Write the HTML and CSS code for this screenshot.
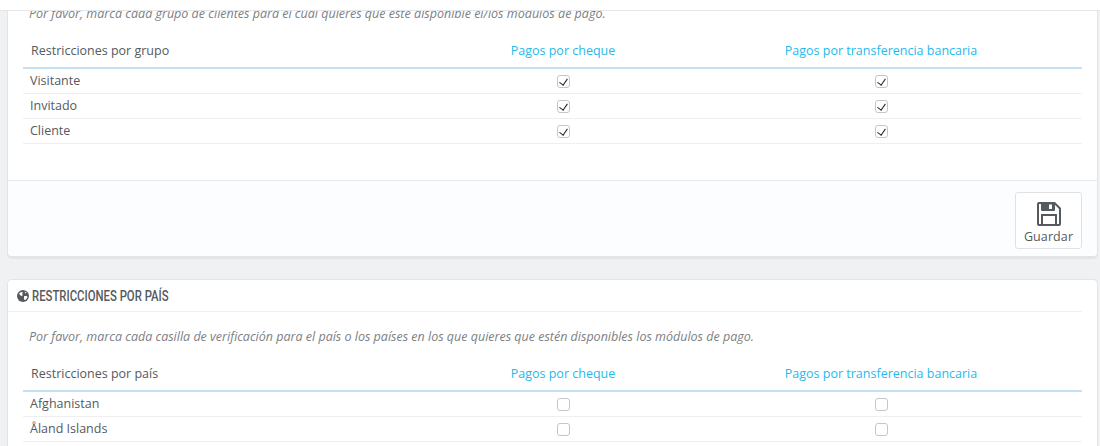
FILE: index.html
```html
<!DOCTYPE html>
<html lang="es">
<head>
<meta charset="utf-8">
<title>Restricciones</title>
<link rel="stylesheet" href="styles.css">
</head>
<body>
<div class="topbar"></div>
<section class="panel panel-first">
  <div class="panel-body">
    <p class="help clipped">Por favor, marca cada grupo de clientes para el cual quieres que esté disponible el/los módulos de pago.</p>
    <table class="grid">
      <thead><tr><th>Restricciones por grupo</th><th class="mod">Pagos por cheque</th><th class="mod">Pagos por transferencia bancaria</th><th class="end"></th></tr></thead>
      <tbody>
        <tr><td>Visitante</td><td class="c"><span class="box on"></span></td><td class="c"><span class="box on"></span></td><td></td></tr>
        <tr><td>Invitado</td><td class="c"><span class="box on"></span></td><td class="c"><span class="box on"></span></td><td></td></tr>
        <tr><td>Cliente</td><td class="c"><span class="box on"></span></td><td class="c"><span class="box on"></span></td><td></td></tr>
      </tbody>
    </table>
  </div>
  <div class="panel-footer">
    <button class="save" type="button">
      <svg class="save-icon" viewBox="0 0 24 24" width="24" height="24" aria-hidden="true">
        <path fill="none" stroke="#555a5e" stroke-width="2" d="M2 1h15.500L23 6.500V22a1 1 0 0 1-1 1H2a1 1 0 0 1-1-1V2a1 1 0 0 1 1-1z"/>
        <path fill="#555a5e" fill-rule="evenodd" d="M4 1h14v7a1 1 0 0 1-1 1H5a1 1 0 0 1-1-1zM12 2.500h3v4.500h-3z"/>
        <rect x="5" y="13" width="14" height="10" fill="none" stroke="#555a5e" stroke-width="2"/>
      </svg>
      <span>Guardar</span>
    </button>
  </div>
</section>
<section class="panel panel-second">
  <h3 class="panel-heading">
    <svg class="globe" viewBox="0 0 12 12" width="12" height="12" aria-hidden="true"><circle cx="6" cy="6" r="6" fill="#555a5e"/><path fill="#fff" d="M2 3.500l2-1.500 2 .5-1 1.500 1 1-1.500 1L3 5zM7 6l3 0 .5 1.500L8.500 10 7 9.500zM7.500 1.500l2 1-1 1z"/></svg>
    <span class="heading-text">RESTRICCIONES POR PAÍS</span>
  </h3>
  <div class="panel-body">
    <p class="help">Por favor, marca cada casilla de verificación para el país o los países en los que quieres que estén disponibles los módulos de pago.</p>
    <table class="grid">
      <thead><tr><th>Restricciones por país</th><th class="mod">Pagos por cheque</th><th class="mod">Pagos por transferencia bancaria</th><th class="end"></th></tr></thead>
      <tbody>
        <tr><td>Afghanistan</td><td class="c"><span class="box"></span></td><td class="c"><span class="box"></span></td><td></td></tr>
        <tr><td>Åland Islands</td><td class="c"><span class="box"></span></td><td class="c"><span class="box"></span></td><td></td></tr>
      </tbody>
    </table>
  </div>
</section>
</body>
</html>
```
FILE: styles.css
```css
* { box-sizing: border-box; }
html, body { height: 446px; overflow: hidden; }
body { margin: 0; padding: 0 2px 0 7px; background: #eff1f2; font-family: "Open Sans", sans-serif; font-size: 12.500px; color: #555a5e; }
.topbar { height: 11px; margin: 0 -2px 0 -7px; background: #fff; border-bottom: 1px solid #e4e6e8; position: relative; z-index: 2; }
.panel { background: #fff; border: 1px solid #e2e5e7; border-radius: 5px; box-shadow: 0 2px 0 rgba(0,0,0,.05); }
.panel-first { margin-top: -1px; height: 247px; border-top: 0; border-radius: 0 0 5px 5px; display: flex; flex-direction: column; overflow: hidden; }
.panel-second { margin-top: 22px; height: 167px; border-bottom: 0; border-radius: 5px 5px 0 0; box-shadow: none; overflow: hidden; }
.panel-body { padding: 0 15px; }
.panel-first .panel-body { height: 170px; }
.panel-footer { flex: 1; background: #fcfdfe; border-top: 1px solid #e8ebed; padding: 11px 15px 0; display: flex; justify-content: flex-end; align-items: flex-start; }
.help { margin: 0; height: 25px; padding-left: 6px; font-style: italic; font-size: 12.500px; color: #7c8084; line-height: 17px; }
.clipped { margin-top: -5px; height: 25px; }
.grid { width: 100%; table-layout: fixed; border-collapse: separate; border-spacing: 0; }
.grid th { height: 39px; font-weight: 400; text-align: left; padding: 4px 0 0 8px; border-bottom: 2px solid #c2e2f4; color: #555a5e; }
.grid th.mod { text-align: center; color: #25b9ed; padding: 4px 0 0; width: 318px; }
.grid th.end { width: 42px; padding: 0; }
.grid td { height: 25px; padding: 0 0 2px 7px; border-bottom: 1px solid #eeeff0; }
.grid td.c { padding: 0 0 2px; text-align: center; }
.box { display: inline-block; width: 13px; height: 13px; border: 1px solid #c4c6c8; border-radius: 3px; background: #fff; vertical-align: middle; position: relative; }
.box.on::after { content: ""; position: absolute; left: 3.500px; top: 1px; width: 4px; height: 7px; border: solid #222; border-width: 0 1.500px 1.500px 0; transform: rotate(35deg); }
.save { width: 67px; height: 57px; padding: 9px 0 0; background: #fff; border: 1px solid #dfe2e4; border-radius: 3px; font: inherit; font-size: 12.500px; letter-spacing: .1px; color: #555a5e; display: flex; flex-direction: column; align-items: center; gap: 2px; }
.save-icon { display: block; }
.panel-heading { margin: 0 15px 0 0; height: 32px; padding-left: 9px; border-bottom: 1px solid #eef0f1; font-family: Roboto, "Open Sans", sans-serif; font-size: 14px; font-weight: 500; color: #555a5e; display: flex; align-items: center; gap: 3px; }
.heading-text { display: inline-block; transform: scaleX(.81); transform-origin: left center; white-space: nowrap; }
.panel-second .panel-body { padding-top: 16px; }
```
